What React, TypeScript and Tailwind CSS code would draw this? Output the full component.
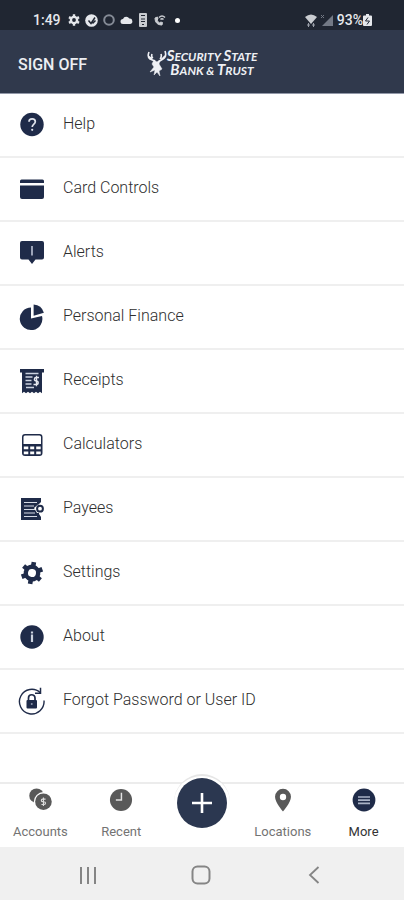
import type { ReactNode } from "react";

function Icon({ children, className = "size-7" }: { children: ReactNode; className?: string }) {
  return (
    <svg viewBox="0 0 28 28" className={`shrink-0 ${className}`} fill="currentColor" aria-hidden="true">
      {children}
    </svg>
  );
}

const items: { label: string; icon: ReactNode }[] = [
  {
    label: "Help",
    icon: (
      <>
        <circle cx="14" cy="13.5" r="11.7" />
        <path d="M11 10.8C11 7 17.3 7 17.3 10.8c0 2.3-3.1 2.3-3.1 5.2" fill="none" stroke="#dfe3ec" strokeWidth="1.7" />
        <circle cx="14.2" cy="18.8" r="1.1" fill="#dfe3ec" />
      </>
    ),
  },
  {
    label: "Card Controls",
    icon: (
      <>
        <path d="M3.5 4.500h21q1.500 0 1.500 1.500v2H2V6q0-1.500 1.500-1.500z" />
        <path d="M2 10.500h24v11.500q0 2-2 2H4q-2 0-2-2z" />
      </>
    ),
  },
  {
    label: "Alerts",
    icon: (
      <>
        <path d="M4 2h20q2 0 2 2v14.500q0 2-2 2h-6.500L14 25l-3.500-4.500H4q-2 0-2-2V4q0-2 2-2z" />
        <path d="M14 7v9.500" stroke="#aab2c6" strokeWidth="1.800" />
      </>
    ),
  },
  {
    label: "Personal Finance",
    icon: (
      <>
        <path d="M13 4.500v11l11-2.600A11.300 11.300 0 1 1 13 4.500z" />
        <path d="M15.600 1.500q8 .4 10.300 8.300l-10.300 3z" />
      </>
    ),
  },
  {
    label: "Receipts",
    icon: (
      <>
        <path d="M2 2h24v3.500h-2v20.700l-2-1.500-2 1.500-2-1.500-2 1.500-2-1.500-2 1.500-2-1.500-2 1.500-2-1.500-2 1.500V5.500H2z" />
        <path d="M7.500 6.500h13M7.500 10h7M7.500 13.500h6M7.500 17h6M8 20.500h8" stroke="#cbd2e0" strokeWidth="1.300" />
        <path d="M21 10.500h-2.800q-1.800 0-1.800 1.700t1.900 1.700 1.900 1.800-2 1.800h-2.700M18.500 8.800v10.400" fill="none" stroke="#e5e8ef" strokeWidth="1.400" />
      </>
    ),
  },
  {
    label: "Calculators",
    icon: (
      <path
        fillRule="evenodd"
        d="M7 3h14.500q3 0 3 3v16q0 3-3 3H7q-3 0-3-3V6q0-3 3-3zM7 4.500q-1.500 0-1.500 1.500v7H23V6q0-1.500-1.500-1.500zM5.800 15.500v2.800h4.500v-2.800zM12.200 15.500v2.800h4v-2.800zM18.200 15.500v2.800h4.500v-2.800zM5.800 20.500v2.800h4.500v-2.800zM12.200 20.500v2.800h4v-2.800zM18.200 20.500v2.800h4.500v-2.800z"
      />
    ),
  },
  {
    label: "Payees",
    icon: (
      <>
        <path d="M3 3h20v4l-2 2v10l2 3v3H3z" />
        <path d="M6 7.500h13M6 11h10M6 14.500h11M6 18h11M6 21.500h13" stroke="#d7dce7" strokeWidth="1.200" />
        <path d="M16 13l4-3.500h3l2.500 2v4.500L23 18h-4z" fill="#fff" />
        <circle cx="22" cy="13.700" r="2.900" fill="#fff" stroke="currentColor" strokeWidth="2" />
      </>
    ),
  },
  {
    label: "Settings",
    icon: (
      <g transform="rotate(10 14 14)">
        <circle cx="14" cy="14" r="6.200" fill="none" stroke="currentColor" strokeWidth="4.400" />
        <g stroke="currentColor" strokeWidth="4.600">
          <path d="M14 3v4M14 21v4M4.500 8.500l3.400 2M20.100 17.500l3.400 2M4.500 19.500l3.400-2M20.100 10.500l3.400-2" />
        </g>
      </g>
    ),
  },
  {
    label: "About",
    icon: (
      <>
        <circle cx="14" cy="14" r="11.700" />
        <path d="M14 8.500v2M14 11.500V19" stroke="#ccd2df" strokeWidth="2.200" />
      </>
    ),
  },
  {
    label: "Forgot Password or User ID",
    icon: (
      <>
        <path d="M26 13.500A12.300 12.300 0 1 1 22.300 5.800" fill="none" stroke="currentColor" strokeWidth="1.400" />
        <path d="M22.500 .8v5.500H17" fill="none" stroke="currentColor" strokeWidth="1.500" />
        <rect x="8.500" y="13" width="10.500" height="8.500" rx="1" />
        <path d="M10.500 13.500v-2.500a3.250 3.250 0 0 1 6.500 0v2.500" fill="none" stroke="currentColor" strokeWidth="1.700" />
        <circle cx="13.750" cy="17" r="1" fill="#8d96ac" />
      </>
    ),
  },
];

function StatusBar() {
  return (
    <div className="flex h-[30px] items-center justify-between bg-[#202632] pt-2.5 pr-8 pl-[33px] text-[#e6e8ec]">
      <div className="flex items-center gap-[5px]">
        <span className="mr-0.5 text-sm leading-5 font-medium">1:49</span>
        <svg viewBox="0 0 12 12" className="size-3" aria-hidden="true">
          <circle cx="6" cy="6" r="3.100" fill="none" stroke="currentColor" strokeWidth="2.400" />
          <path d="M6 .3v2M6 9.700v2M1 3.100l1.700 1M9.300 7.900l1.700 1M1 8.900l1.700-1M9.300 4.100l1.700-1" stroke="currentColor" strokeWidth="2.400" />
        </svg>
        <svg viewBox="0 0 13 13" className="size-[13px]" aria-hidden="true">
          <circle cx="6.500" cy="6.500" r="6.300" fill="currentColor" />
          <path d="M3.500 6.500l2.500 3 4-6M7.500 9.500l3-3" fill="none" stroke="#202632" strokeWidth="1.500" />
        </svg>
        <svg viewBox="0 0 12 12" className="size-3" aria-hidden="true">
          <circle cx="6" cy="6" r="4.800" fill="none" stroke="#858b96" strokeWidth="2" />
        </svg>
        <svg viewBox="0 0 13 10" className="h-2.5 w-[13px]" aria-hidden="true">
          <path d="M3 9a2.500 2.500 0 0 1 0-5 3.500 3.500 0 0 1 6.300-.4A2.700 2.700 0 1 1 10 9z" fill="currentColor" />
        </svg>
        <svg viewBox="0 0 10 14" className="h-3.5 w-2.5" aria-hidden="true">
          <rect x="1" y="0" width="8" height="14" rx="1" fill="#c9ccd1" />
          <path d="M3 2.500h4M3 6h4M3 8.500h4M4 11.500h2" stroke="#202632" strokeWidth="1.200" />
        </svg>
        <svg viewBox="0 0 13 13" className="size-[13px]" fill="none" stroke="#c9ccd1" aria-hidden="true">
          <path d="M2 4c0 4.500 2.500 7 7 7l.5-2.500-2-.5-1 1Q4.500 7.500 4 6l1-1-.5-2z" fill="#c9ccd1" />
          <path d="M6 3.500q3-3 6 0M7.500 5.500q1.500-1.500 3 0" strokeWidth="1.500" />
        </svg>
        <span className="ml-1 size-[5px] rounded-full bg-white" />
      </div>
      <div className="flex items-center gap-1">
        <svg viewBox="0 0 12 13" className="h-[13px] w-3" aria-hidden="true">
          <path d="M0 3q6-5 12 0L6 10z" fill="#c9ccd1" />
          <path d="M3.500 9v4M8.500 9v4M2 11h3M7 11h3" stroke="#9a9fa9" />
        </svg>
        <svg viewBox="0 0 12 12" className="size-3" aria-hidden="true">
          <path d="M12 1v11H1z" fill="#737985" />
          <path d="M0 1l3 3M3 1L0 4" stroke="#737985" />
        </svg>
        <div className="flex items-center">
          <span className="text-sm leading-5 font-medium">93%</span>
          <svg viewBox="0 0 9 12" className="h-3 w-[9px]" aria-hidden="true">
            <path d="M3 0h3v1.500h2q1 0 1 1V11q0 1-1 1H1q-1 0-1-1V2.500q0-1 1-1h2z" fill="currentColor" />
            <path d="M5 3.500L2.500 7h4L4 10.500" fill="none" stroke="#202632" />
          </svg>
        </div>
      </div>
    </div>
  );
}

function LogoWord({ children }: { children: string }) {
  return <span className="inline-block uppercase first-letter:text-[15px] first-letter:leading-3">{children}</span>;
}

function Header() {
  return (
    <header className="grid h-16 grid-cols-[1fr_auto_1fr] items-center border-b border-[#9298a8] bg-[#30394c] px-[18px] text-white">
      <button type="button" className="justify-self-start pt-1.5 text-base leading-6 font-medium text-[#eceef2]">
        SIGN OFF
      </button>
      <div className="flex items-center pt-0.5">
        <svg viewBox="0 0 20 26" className="h-[26px] w-5" fill="none" stroke="#eef0f4" aria-hidden="true">
          <path d="M2 2q-2 5 1 7l5 2M5 4q-1 3 1 4M1 6l4 3M18 1q2 6-2 8l-5 3M14 4q1 3-1 5M18 6l-4 4" strokeWidth="1.600" />
          <path d="M7 10l3 2 3-2-1 4 3 5-3 2 1 5-3-4-3 3 1-5-5 2 4-5-2-3z" fill="#eef0f4" strokeWidth=".5" />
        </svg>
        <div className="text-center font-['Lato'] text-xs leading-[13px] font-bold whitespace-nowrap text-[#eef0f4] italic">
          <div>
            <LogoWord>Security</LogoWord> <LogoWord>State</LogoWord>
          </div>
          <div>
            <LogoWord>Bank</LogoWord> &amp; <LogoWord>Trust</LogoWord>
          </div>
        </div>
      </div>
    </header>
  );
}

const tabs: { label: string; icon: ReactNode; active?: boolean }[] = [
  {
    label: "Accounts",
    icon: (
      <>
        <circle cx="10" cy="9" r="8.500" />
        <circle cx="18" cy="16" r="11.200" fill="#fff" />
        <circle cx="18" cy="16" r="9.700" />
        <path d="M20.500 13h-3.300q-1.700 0-1.700 1.500t2.500 1.500 2.500 1.600-1.800 1.600h-3M18 11v10" fill="none" stroke="#ddd" strokeWidth="1.300" />
      </>
    ),
  },
  {
    label: "Recent",
    icon: (
      <>
        <circle cx="14" cy="14" r="12.900" />
        <path d="M14.500 5.500V14H8" fill="none" stroke="#e2e2e2" strokeWidth="1.700" />
      </>
    ),
  },
  {
    label: "Locations",
    icon: <path fillRule="evenodd" d="M14 1a9.300 9.300 0 0 1 9.300 9.300C23.300 17 14 27.500 14 27.500S4.700 17 4.700 10.300A9.300 9.300 0 0 1 14 1zm0 5.800a3.700 3.700 0 1 0 0 7.400 3.700 3.700 0 0 0 0-7.400z" />,
  },
  {
    label: "More",
    active: true,
    icon: (
      <>
        <circle cx="14" cy="14" r="13.300" />
        <path d="M7 10.500h14M7 14.200h14M7 18h14" stroke="#aab3c6" strokeWidth="2" />
      </>
    ),
  },
];

function Tab({ label, icon, active }: { label: string; icon: ReactNode; active?: boolean }) {
  return (
    <button type="button" className={`flex flex-col items-center gap-3 pt-1 ${active ? "text-[#1f2b49]" : "text-[#595959]"}`}>
      <Icon className="size-6">{icon}</Icon>
      <span className={`text-[13px] leading-4 ${active ? "text-[#333333]" : "text-[#737373]"}`}>{label}</span>
    </button>
  );
}

export default function App() {
  return (
    <div className="flex min-h-screen flex-col bg-white font-['Roboto',sans-serif]">
      <StatusBar />
      <Header />
      <main className="flex-1">
        <ul>
          {items.map((item) => (
            <li key={item.label} className="border-b-2 border-[#efefef]">
              <button type="button" className="flex h-[62px] w-full items-center gap-[17px] pl-[18px] text-left text-[#1f2b49]">
                <Icon>{item.icon}</Icon>
                <span className="pb-0.5 text-base leading-6 font-light text-[#2e2e2e]">{item.label}</span>
              </button>
            </li>
          ))}
        </ul>
      </main>
      <nav className="grid h-[65px] grid-cols-5 items-start border-t-2 border-[#ececec] bg-white">
        <Tab {...tabs[0]} />
        <Tab {...tabs[1]} />
        <button
          type="button"
          aria-label="Add"
          className="-mt-2.5 flex size-14 items-center justify-center justify-self-center rounded-full border-t-2 border-[#e6e6e6] bg-white"
        >
          <span className="flex size-[50px] items-center justify-center rounded-full bg-[#2b3750]">
            <svg viewBox="0 0 24 24" className="size-6" stroke="#fff" strokeWidth="2.600" aria-hidden="true">
              <path d="M12 2v20M2 12h20" />
            </svg>
          </span>
        </button>
        <Tab {...tabs[2]} />
        <Tab {...tabs[3]} />
      </nav>
      <div className="flex h-[53px] items-center justify-center gap-[93px] bg-[#f0f0f0] pt-0.5 pr-0.5 text-[#858585]">
        <button type="button" aria-label="Recent apps">
          <svg viewBox="0 0 20 20" className="size-5" fill="none" stroke="currentColor" strokeWidth="2">
            <path d="M3 2v17M10 2v17M17 2v17" />
          </svg>
        </button>
        <button type="button" aria-label="Home">
          <svg viewBox="0 0 20 20" className="size-5" fill="none" stroke="currentColor" strokeWidth="2">
            <rect x="1.500" y="1.500" width="17" height="17" rx="5" />
          </svg>
        </button>
        <button type="button" aria-label="Back">
          <svg viewBox="0 0 20 20" className="size-5" fill="none" stroke="currentColor" strokeWidth="1.800">
            <path d="M14.500 2L6 10l8.500 8" />
          </svg>
        </button>
      </div>
    </div>
  );
}
